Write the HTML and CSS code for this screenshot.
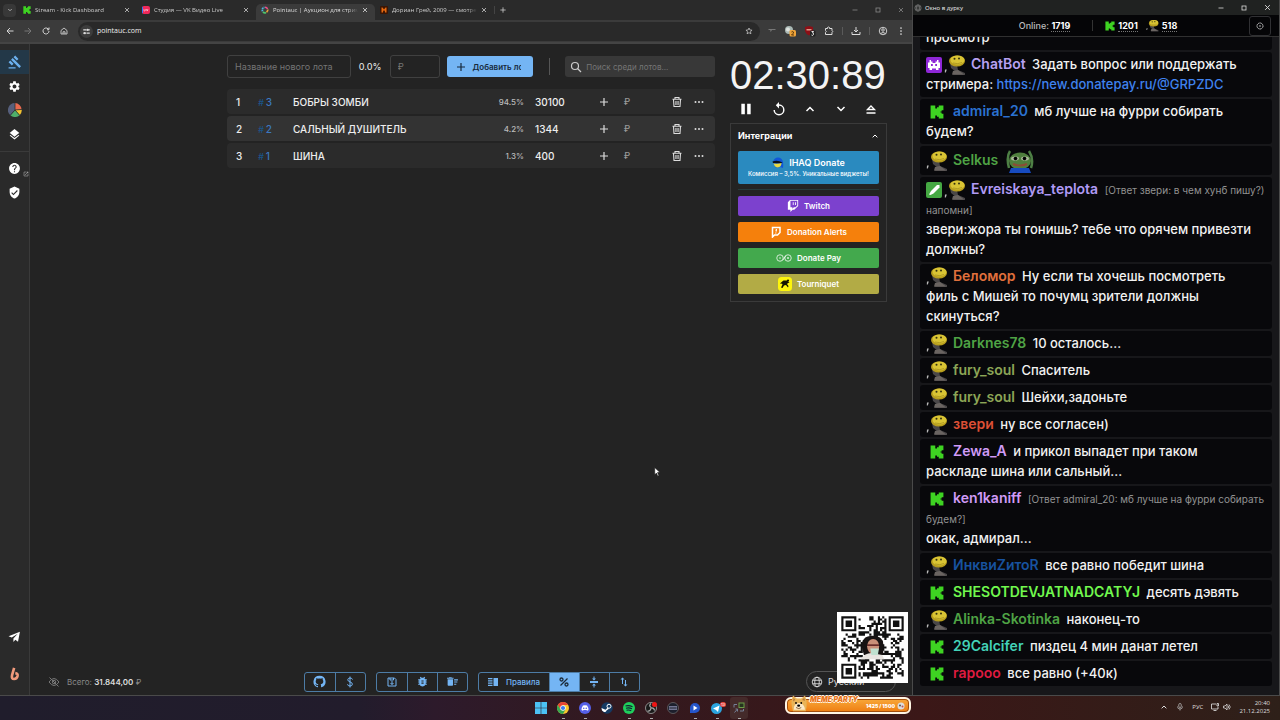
FILE: index.html
```html
<!DOCTYPE html>
<html lang="ru">
<head>
<meta charset="utf-8">
<title>Pointauc | Аукцион для стримеров</title>
<link rel="stylesheet" href="styles.css">
</head>
<body>
<svg class="defs" aria-hidden="true">
  <symbol id="kick" viewBox="0 0 24 24"><path fill="#3ed322" d="M1 1h8v5h3V4h3V1h8v8h-3v2h-2v2h2v2h3v8h-8v-3h-3v-2H9v5H1z"/></symbol>
  <symbol id="vk" viewBox="0 0 22 20">
    <path d="M1 14.500h1.800l-1 3H.8z" fill="#b9b9b9"/>
    <path d="M6 8l7 2 1 5 7 3v2H8l4-3-5-4z" fill="#4a4748"/><path d="M9 16l5-1 6 4.500H8z" fill="#6a6461"/>
    <ellipse cx="13" cy="6" rx="8" ry="5.500" fill="#b89e1d"/><ellipse cx="13.500" cy="5" rx="7" ry="4.500" fill="#d9c434"/>
    <circle cx="10.500" cy="3.800" r="1" fill="#35320f"/><circle cx="15" cy="3.500" r="1" fill="#35320f"/><path d="M9 8q5 1.500 9-.5" fill="none" stroke="#a8931f" stroke-width=".8"/>
  </symbol>
  <symbol id="close" viewBox="0 0 12 12"><path d="M2 2l8 8M10 2l-8 8" fill="none" stroke="currentColor" stroke-width="1.600"/></symbol>
  <symbol id="min" viewBox="0 0 12 12"><path d="M1 6h10" stroke="currentColor" stroke-width="1.600"/></symbol>
  <symbol id="max" viewBox="0 0 12 12"><rect x="2" y="2" width="8" height="8" fill="none" stroke="currentColor" stroke-width="1.600"/></symbol>
  <symbol id="plus" viewBox="0 0 24 24"><path d="M12 4v16M4 12h16" stroke="currentColor" stroke-width="2.400"/></symbol>
  <symbol id="up" viewBox="0 0 24 24"><path d="M5 16l7-7 7 7" fill="none" stroke="currentColor" stroke-width="3"/></symbol>
  <symbol id="down" viewBox="0 0 24 24"><path d="M5 8l7 7 7-7" fill="none" stroke="currentColor" stroke-width="3"/></symbol>
  <symbol id="trash" viewBox="0 0 24 24"><path d="M3 6.500h18M8 6V3h8v3M5 7l1 14h12l1-14" fill="none" stroke="currentColor" stroke-width="2.200"/><path d="M9.500 10v8M12 10v8M14.500 10v8" stroke="currentColor" stroke-width="1.600"/></symbol>
  <symbol id="dots" viewBox="0 0 24 24"><circle cx="5" cy="12" r="2" fill="currentColor"/><circle cx="12" cy="12" r="2" fill="currentColor"/><circle cx="19" cy="12" r="2" fill="currentColor"/></symbol>
  <symbol id="globe" viewBox="0 0 24 24"><g fill="none" stroke="currentColor" stroke-width="1.800"><circle cx="12" cy="12" r="9.500"/><ellipse cx="12" cy="12" rx="4.500" ry="9.500"/><path d="M3.500 8.500h17M3.500 15.500h17"/></g></symbol>
</svg>

<div class="desktop">
<section class="browser" aria-label="Браузер">
  <header class="tabs">
    <button class="tab-menu" aria-label="Поиск вкладок"><svg class="i6"><use href="#down"/></svg></button>
    <div class="tab"><svg class="i8"><use href="#kick"/></svg><span>Stream - Kick Dashboard</span><button aria-label="Закрыть"><svg class="i6"><use href="#close"/></svg></button></div>
    <div class="tab"><svg class="i8" viewBox="0 0 16 16"><rect width="16" height="16" rx="4" fill="#f0295a"/><path d="M0 4a4 4 0 0 1 2-3v14a4 4 0 0 1-2-3z" fill="#2b7bff"/><path d="M4 6v4h2M7.500 6v4M9 6l1.500 4L12 6" fill="none" stroke="#fff"/></svg><span>Студия — VK Видео Live</span><button aria-label="Закрыть"><svg class="i6"><use href="#close"/></svg></button></div>
    <div class="tab active"><svg class="i8" viewBox="0 0 16 16"><g fill="none" stroke-width="3.500"><path d="M8 2.500a5.500 5.500 0 0 1 5 3.500" stroke="#ef4b86"/><path d="M13.400 7a5.500 5.500 0 0 1-2.400 5.500" stroke="#e9a13c"/><path d="M10 13.200a5.500 5.500 0 0 1-6-1.500" stroke="#4dc46c"/><path d="M3.200 10.500A5.500 5.500 0 0 1 7 2.600" stroke="#4fb8e0" stroke-dasharray="3 1"/></g></svg><span>Pointauc | Аукцион для стримеров</span><button aria-label="Закрыть"><svg class="i6"><use href="#close"/></svg></button></div>
    <div class="tab"><svg class="i8" viewBox="0 0 16 16"><rect width="16" height="16" rx="2" fill="#3b1604"/><path d="M3 13V3h2l3 4 3-4h2v10h-3V8l-2 3-2-3v5z" fill="#e86a10"/></svg><span>Дориан Грей, 2009 — смотреть</span><button aria-label="Закрыть"><svg class="i6"><use href="#close"/></svg></button></div>
    <button class="new-tab" aria-label="Новая вкладка"><svg class="i8"><use href="#plus"/></svg></button>
    <div class="win-btns dim"><button aria-label="Свернуть"><svg class="i6"><use href="#min"/></svg></button><button aria-label="Развернуть"><svg class="i6"><use href="#max"/></svg></button><button aria-label="Закрыть окно"><svg class="i6"><use href="#close"/></svg></button></div>
  </header>
  <div class="toolbar">
    <button aria-label="Назад"><svg class="i8" viewBox="0 0 16 16"><path d="M15 8H2M8 2L2 8l6 6" fill="none" stroke="currentColor" stroke-width="2"/></svg></button>
    <button class="off" aria-label="Вперёд"><svg class="i8" viewBox="0 0 16 16"><path d="M1 8h13M8 2l6 6-6 6" fill="none" stroke="currentColor" stroke-width="2"/></svg></button>
    <button aria-label="Обновить"><svg class="i8" viewBox="0 0 16 16"><path d="M14 8a6 6 0 1 1-2-4.500L14 5V1M14 5.500h-4" fill="none" stroke="currentColor" stroke-width="2"/></svg></button>
    <button aria-label="Домой"><svg class="i8" viewBox="0 0 16 16"><path d="M2 7l6-5 6 5v7H2zM6 14V9.500h4V14" fill="none" stroke="currentColor" stroke-width="1.700"/></svg></button>
    <div class="address">
      <svg class="site" viewBox="0 0 24 24"><circle cx="12" cy="12" r="12" fill="#3c3c3c"/><path d="M6 9h6M15 9h3M6 15h3M12 15h6" stroke="#ddd" stroke-width="2"/><circle cx="14" cy="9" r="2" fill="#ddd"/><circle cx="9" cy="15" r="2" fill="#ddd"/></svg>
      <input type="text" value="pointauc.com" aria-label="Адрес">
      <svg class="i8" viewBox="0 0 24 24"><path d="M12 3l2.700 6 6.500.6-4.900 4.300 1.500 6.400L12 17l-5.800 3.300 1.500-6.400-4.900-4.300 6.500-.6z" fill="none" stroke="#ddd" stroke-width="2"/></svg>
    </div>
    <div class="ext">
      <svg class="i8" viewBox="0 0 16 16"><path d="M1 4h14v2H8l-2 3H4l1-3H1z" fill="#777"/></svg>
      <svg class="i12" viewBox="0 0 24 24"><circle cx="10" cy="10" r="8" fill="#a9b8b4"/><circle cx="8" cy="9" r="4" fill="#dfe3df"/><rect x="11" y="10" width="13" height="13" rx="3" fill="#f0a43a"/><path d="M15 14q3-2 4 0t-4 6h5" fill="none" stroke="#4b2c05" stroke-width="1.800"/></svg>
      <svg class="i12" viewBox="0 0 24 24"><path d="M2 4l8-2 8 2v8q-2 7-8 9-6-2-8-9z" fill="#8d0f16"/><path d="M5 8h10v3H5z" fill="#d98"/><rect x="12" y="11" width="11" height="12" rx="2" fill="#222"/><path d="M15 13h4l-2 3q3 0 2 3t-4 1" fill="none" stroke="#fff" stroke-width="1.800"/></svg>
      <svg class="i10" viewBox="0 0 20 20"><path d="M3 5h4V3q2-2 4 0v2h5v4q3 2 0 4v4H3v-4q3-2 0-4z" fill="none" stroke="#ddd" stroke-width="2"/></svg>
      <i></i>
      <svg class="i10" viewBox="0 0 20 20"><path d="M10 2v10M6 8l4 4 4-4M2 12v5h16v-5" fill="none" stroke="#ddd" stroke-width="2"/></svg>
      <i></i>
      <svg class="i10" viewBox="0 0 20 20"><circle cx="10" cy="10" r="7.500" fill="none" stroke="#ddd" stroke-width="1.800"/><circle cx="10" cy="8" r="2.500" fill="none" stroke="#ddd" stroke-width="1.800"/><path d="M5 15q5-4 10 0" fill="none" stroke="#ddd" stroke-width="1.800"/></svg>
      <svg class="i10" viewBox="0 0 20 20"><circle cx="10" cy="4" r="1.700" fill="#ddd"/><circle cx="10" cy="10" r="1.700" fill="#ddd"/><circle cx="10" cy="16" r="1.700" fill="#ddd"/></svg>
    </div>
  </div>

  <div class="page">
    <nav class="side">
      <a class="on" href="#auction" aria-label="Аукцион"><svg class="i14" viewBox="0 0 24 24"><path fill="currentColor" d="M1 21h12v2H1zM5.245 8.070l2.830-2.827 14.140 14.142-2.828 2.828zM12.317 1l5.657 5.656-2.830 2.830-5.654-5.660zM3.825 9.485l5.657 5.657-2.828 2.828-5.657-5.657z"/></svg></a>
      <a href="#settings" aria-label="Настройки"><svg class="i13" viewBox="0 0 24 24"><path fill="currentColor" d="M19.140 12.940c.04-.3.06-.61.06-.94 0-.32-.02-.64-.07-.94l2.030-1.580c.18-.14.23-.41.12-.61l-1.920-3.320c-.12-.22-.37-.29-.59-.22l-2.390.96c-.5-.38-1.030-.7-1.620-.94l-.36-2.540c-.04-.24-.24-.41-.48-.41h-3.840c-.24 0-.43.17-.47.41l-.36 2.540c-.59.24-1.130.57-1.620.94l-2.390-.96c-.22-.08-.47 0-.59.22L2.740 8.870c-.12.21-.08.47.12.61l2.030 1.580c-.05.3-.09.63-.09.94s.02.64.07.94l-2.030 1.580c-.18.14-.23.41-.12.61l1.920 3.320c.12.22.37.29.59.22l2.390-.96c.5.38 1.030.7 1.620.94l.36 2.540c.05.24.24.41.48.41h3.840c.24 0 .44-.17.47-.41l.36-2.540c.59-.24 1.130-.56 1.620-.94l2.390.96c.22.08.47 0 .59-.22l1.920-3.320c.12-.22.07-.47-.12-.61l-2.010-1.580zM12 15.600c-1.980 0-3.600-1.620-3.600-3.600s1.620-3.600 3.600-3.600 3.600 1.620 3.600 3.600-1.620 3.600-3.600 3.600z"/></svg></a>
      <a href="#wheel" aria-label="Колесо"><svg class="i14" viewBox="-12 -12 24 24"><path d="M0 0V-12A12 12 0 0 1 11.400-1z" fill="#e8694f"/><path d="M0 0L11.400-1A12 12 0 0 1 8 9z" fill="#f2c230"/><path d="M0 0l8 9A12 12 0 0 1-8 9z" fill="#4fae6a"/><path d="M0 0l-8 9A12 12 0 0 1 0-12z" fill="#565f7c"/><path d="M0-12V0l12-1M0 0l8 9M0 0l-8 9" stroke="#2a2a2a" stroke-width="1.300" fill="none"/></svg></a>
      <a href="#overlays" aria-label="Оверлеи"><svg class="i13" viewBox="0 0 24 24"><path fill="currentColor" d="m11.990 18.540-7.370-5.730L3 14.070l9 7 9-7-1.630-1.270-7.380 5.740zM12 16l7.360-5.730L21 9l-9-7-9 7 1.630 1.270L12 16z"/></svg></a>
      <hr>
      <a href="#help" aria-label="Помощь"><svg class="i13" viewBox="0 0 24 24"><path fill="currentColor" d="M12 2C6.480 2 2 6.480 2 12s4.480 10 10 10 10-4.480 10-10S17.520 2 12 2zm1 17h-2v-2h2v2zm2.070-7.750l-.9.920C13.450 12.900 13 13.500 13 15h-2v-.5c0-1.100.45-2.100 1.170-2.830l1.240-1.260c.37-.36.59-.86.59-1.410 0-1.100-.9-2-2-2s-2 .9-2 2H8c0-2.210 1.790-4 4-4s4 1.790 4 4c0 .88-.36 1.680-.93 2.250z"/></svg><svg class="external" viewBox="0 0 24 24"><path fill="#bbb" d="M19 19H5V5h7V3H5c-1.110 0-2 .9-2 2v14c0 1.100.89 2 2 2h14c1.100 0 2-.9 2-2v-7h-2v7zM14 3v2h3.590l-9.830 9.830 1.410 1.410L19 6.410V10h2V3h-7z"/></svg></a>
      <a href="#privacy" aria-label="Безопасность"><svg class="i13" viewBox="0 0 24 24"><path fill="currentColor" d="M12 1L3 5v6c0 5.550 3.840 10.740 9 12 5.160-1.260 9-6.450 9-12V5l-9-4zm-2 16l-4-4 1.410-1.410L10 14.170l6.590-6.590L18 9l-8 8z"/></svg></a>
      <div class="social">
        <a href="#telegram" aria-label="Telegram"><svg class="i13" viewBox="0 0 24 24"><path fill="currentColor" d="M22 3L1 11.500l6 2.500L18 7l-8 8.500V22l3.500-4 5 3.500z"/></svg></a>
        <a href="#boosty" aria-label="Boosty"><svg class="i14" viewBox="0 0 24 24"><path d="M10.500 1.500L7 14q-1.500 6.500 3.500 6.500t6-5.500q.5-4-4-4.500" fill="none" stroke="#f09a7c" stroke-width="4.500"/></svg></a>
      </div>
    </nav>

    <main class="auction">
      <div class="work">
        <div class="lots">
          <form class="new-lot">
            <input class="lot-name" type="text" placeholder="Название нового лота" aria-label="Название нового лота">
            <output>0.0%</output>
            <input class="lot-sum" type="text" placeholder="₽" aria-label="Сумма">
            <button class="add" type="button"><svg class="i12"><use href="#plus"/></svg><span>Добавить лот</span></button>
            <i class="bar"></i>
            <label class="search"><svg class="i12" viewBox="0 0 24 24"><circle cx="10" cy="10" r="7" fill="none" stroke="#ccc" stroke-width="2.400"/><path d="M15 15l7 7" stroke="#ccc" stroke-width="2.600"/></svg><input type="text" placeholder="Поиск среди лотов..." aria-label="Поиск среди лотов"></label>
          </form>
          <ol class="rows">
            <li><b>1</b><span class="id"><i>#</i>3</span><span class="name">БОБРЫ ЗОМБИ</span><span class="pct">94.5%</span><span>30100</span><button aria-label="Добавить сумму"><svg class="i12"><use href="#plus"/></svg></button><span class="rub">₽</span><button aria-label="Удалить"><svg class="i12"><use href="#trash"/></svg></button><button aria-label="Ещё"><svg class="i12"><use href="#dots"/></svg></button></li>
            <li><b>2</b><span class="id"><i>#</i>2</span><span class="name">САЛЬНЫЙ ДУШИТЕЛЬ</span><span class="pct">4.2%</span><span>1344</span><button aria-label="Добавить сумму"><svg class="i12"><use href="#plus"/></svg></button><span class="rub">₽</span><button aria-label="Удалить"><svg class="i12"><use href="#trash"/></svg></button><button aria-label="Ещё"><svg class="i12"><use href="#dots"/></svg></button></li>
            <li><b>3</b><span class="id"><i>#</i>1</span><span class="name">ШИНА</span><span class="pct">1.3%</span><span>400</span><button aria-label="Добавить сумму"><svg class="i12"><use href="#plus"/></svg></button><span class="rub">₽</span><button aria-label="Удалить"><svg class="i12"><use href="#trash"/></svg></button><button aria-label="Ещё"><svg class="i12"><use href="#dots"/></svg></button></li>
          </ol>
        </div>
        <aside>
          <div class="timer">02:30:89</div>
          <div class="controls">
            <button aria-label="Пауза"><svg class="i14" viewBox="0 0 24 24"><path fill="currentColor" d="M4 3h6v18H4zM14 3h6v18h-6z"/></svg></button>
            <button aria-label="Сбросить"><svg class="i14" viewBox="0 0 24 24"><path fill="currentColor" d="M12 4V0L6.500 5.500 12 11V6.500a7 7 0 1 1-7 7H2.500A9.500 9.500 0 1 0 12 4z"/></svg></button>
            <button aria-label="Больше"><svg class="i12"><use href="#up"/></svg></button>
            <button aria-label="Меньше"><svg class="i12"><use href="#down"/></svg></button>
            <button aria-label="Максимум"><svg class="i12" viewBox="0 0 24 24"><path d="M5 13l7-7 7 7zM3 20h18" fill="none" stroke="currentColor" stroke-width="2.600"/></svg></button>
          </div>
          <section class="integrations">
            <h2>Интеграции <svg class="i8"><use href="#up"/></svg></h2>
            <button class="ihaq"><strong><svg class="i12" viewBox="0 0 24 24"><path d="M2 10Q4 1 12 1t10 9q1 7 0 12l-6-2-8 2z" fill="#1156d8"/><path d="M1 9q10-4 20 2l-4 2-15-1z" fill="#0b1119"/><path d="M3 13q9 1 16-1 0 8-8 9-5 0-8-8z" fill="#e9dc42"/></svg>IHAQ Donate</strong><small>Комиссия – 3,5%. Уникальные виджеты!</small></button>
            <hr>
            <button class="twitch"><svg class="i12" viewBox="0 0 24 24"><path fill="#fff" d="M11.571 4.714h1.715v5.143H11.570zm4.715 0H18v5.143h-1.714zM6 0L1.714 4.286v15.428h5.143V24l4.286-4.286h3.428L22.286 12V0zm14.571 11.143l-3.428 3.428h-3.429l-3 3v-3H6.857V1.714h13.714Z"/></svg>Twitch</button>
            <button class="alerts"><svg class="i12" viewBox="0 0 24 24"><path d="M5 3h15v10l-5 5H9l-4 4z" fill="none" stroke="#fff" stroke-width="3"/><path d="M13 6l-1 5M11.800 13l-.3 2" stroke="#fff" stroke-width="2.600"/></svg>Donation Alerts</button>
            <button class="dpay"><svg class="wide" viewBox="0 0 32 16"><g fill="none" stroke="#fff" stroke-width="1.500"><circle cx="8" cy="8" r="6.500"/><circle cx="24" cy="8" r="6.500"/><path d="M14 12l5-8M6 8h4M22 8h4M24 6v4"/></g></svg>Donate Pay</button>
            <button class="tourn"><svg class="i14" viewBox="0 0 28 28"><rect width="28" height="28" rx="7" fill="#fdf50c"/><path d="M5 12l6-5h7l5 4-3 1-2 2 3 4-1 3-4-5-4 1-3 5-3-1 3-6-1-2-3 1z" fill="#141400"/><circle cx="20" cy="7" r="2.200" fill="#141400"/></svg>Tourniquet</button>
          </section>
        </aside>
      </div>
      <footer class="foot">
        <div class="total"><svg class="i12" viewBox="0 0 24 24"><g fill="none" stroke="#777" stroke-width="2"><path d="M2 12q10-14 20 0-10 14-20 0z"/><circle cx="12" cy="12" r="3.500"/><path d="M3 3l18 18"/></g></svg><span>Всего: <b>31.844,00</b> ₽</span></div>
        <div class="tools">
          <div class="group">
            <button aria-label="GitHub"><svg class="i13" viewBox="0 0 24 24"><path fill="currentColor" d="M12 1.270a11 11 0 00-3.480 21.460c.55.09.73-.28.73-.55v-1.840c-3.030.64-3.670-1.460-3.670-1.460-.55-1.290-1.280-1.650-1.280-1.650-.92-.65.1-.65.1-.65 1.100 0 1.730 1.100 1.730 1.100.92 1.650 2.570 1.200 3.210.92a2 2 0 01.64-1.470c-2.470-.27-5.040-1.190-5.040-5.500 0-1.100.46-2.100 1.200-2.840a3.760 3.760 0 010-2.930s.91-.28 3.110 1.100c1.800-.49 3.700-.49 5.500 0 2.100-1.380 3.020-1.100 3.020-1.100a3.760 3.760 0 01.1 2.930c.83.74 1.200 1.740 1.200 2.940 0 4.210-2.570 5.130-5.040 5.400.45.37.82.92.82 2.020v3.030c0 .27.1.64.73.55A11 11 0 0012 1.270"/></svg></button>
            <button aria-label="Поддержать"><svg class="i12" viewBox="0 0 24 24"><path d="M17 7q-1-3-5-3T7.500 7.500q0 3 4.500 4.200t4.700 4.600Q16.500 20 12 20t-5-3.500M12 1v22" fill="none" stroke="currentColor" stroke-width="2"/></svg></button>
          </div>
          <div class="group">
            <button aria-label="Сохранить"><svg class="i12" viewBox="0 0 24 24"><path d="M4 4h13l3 3v13H4zM8 4v4h7V4M12 10v7M9 14l3 3 3-3" fill="none" stroke="currentColor" stroke-width="2"/></svg></button>
            <button aria-label="Сообщить об ошибке"><svg class="i13" viewBox="0 0 24 24"><path fill="currentColor" d="M20 8h-2.810c-.45-.78-1.070-1.450-1.820-1.960L17 4.410 15.590 3l-2.170 2.170C12.960 5.060 12.490 5 12 5s-.96.06-1.410.17L8.410 3 7 4.410l1.620 1.630C7.880 6.550 7.260 7.220 6.810 8H4v2h2.090c-.05.33-.09.66-.09 1v1H4v2h2v1c0 .34.04.67.09 1H4v2h2.810c1.040 1.790 2.970 3 5.190 3s4.150-1.210 5.190-3H20v-2h-2.090c.05-.33.09-.66.09-1v-1h2v-2h-2v-1c0-.34-.04-.67-.09-1H20V8zm-6 8h-4v-2h4v2zm0-4h-4v-2h4v2z"/></svg></button>
            <button aria-label="Очистить"><svg class="i13" viewBox="0 0 24 24"><path fill="currentColor" d="M15 16h4v2h-4zm0-8h7v2h-7zm0 4h6v2h-6zM3 18c0 1.100.9 2 2 2h6c1.100 0 2-.9 2-2V8H3v10zM14 5h-3l-1-1H6L5 5H2v2h12z"/></svg></button>
          </div>
          <div class="group">
            <button class="rules"><svg class="i12" viewBox="0 0 24 24"><path fill="currentColor" d="M2 4h9v2.500H2zM2 8.500h9V11H2zM2 13h9v2.500H2zM2 17.500h9V20H2zM13 4h9v16h-9z"/></svg>Правила</button>
            <button class="sel" aria-label="Проценты"><svg class="i12" viewBox="0 0 24 24"><g fill="none" stroke="currentColor" stroke-width="2.600"><circle cx="7" cy="7" r="3"/><circle cx="17" cy="17" r="3"/><path d="M19 5L5 19"/></g></svg></button>
            <button aria-label="Выровнять"><svg class="i12" viewBox="0 0 24 24"><path fill="currentColor" d="M8 19h3v4h2v-4h3l-4-4-4 4zm8-14h-3V1h-2v4H8l4 4 4-4zM4 10v4h16v-4H4z"/></svg></button>
            <button aria-label="Сортировка"><svg class="i12" viewBox="0 0 24 24"><path fill="currentColor" d="M9 3L5 7h3v9h2V7h3zM16 17V8h-2v9h-3l4 4 4-4z"/></svg></button>
          </div>
        </div>
        <button class="lang"><svg class="i12"><use href="#globe"/></svg>Русский</button>
      </footer>
      <svg class="cursor" viewBox="0 0 12 18"><path d="M1 1v13l3-3 2.500 5.500 2-1L6 10h4.500z" fill="#fff" stroke="#111"/></svg>
    </main>
  </div>
  <svg class="qr" viewBox="-2 -2 33 33" role="img" aria-label="QR-код"></svg>
</section>

<section class="chat" aria-label="Чат">
  <header class="chat-title"><svg class="i8"><use href="#globe"/></svg><span>Окно в дурку</span><div class="win-btns"><button aria-label="Свернуть"><svg class="i6"><use href="#min"/></svg></button><button aria-label="Развернуть"><svg class="i6"><use href="#max"/></svg></button><button aria-label="Закрыть окно"><svg class="i7"><use href="#close"/></svg></button></div></header>
  <div class="stats">
    <span class="online">Online: <b>1719</b></span><i></i>
    <span class="count"><svg class="i10"><use href="#kick"/></svg><b>1201</b></span>
    <span class="count"><svg class="i13"><use href="#vk"/></svg><b>518</b></span>
    <button aria-label="Настройки чата"><svg class="i8" viewBox="0 0 24 24"><circle cx="12" cy="12" r="9" fill="none" stroke="#ccc" stroke-width="3" stroke-dasharray="4 1"/><circle cx="12" cy="12" r="2.500" fill="#ccc"/></svg></button>
  </div>
  <div class="log">
    <p>просмотр</p>
    <p><svg class="badge" viewBox="0 0 16 16"><rect width="16" height="16" rx="2" fill="#8f27d8"/><path fill="#fff" d="M3.500 3H5v1.500h1.500V6h3V4.500H11V3h1.500v2.500H14V11h-1.500v2H10v-1.500H6V13H3.500v-2H2V5.500h1.500z"/><path fill="#8f27d8" d="M5 7h1.800v2H5zM9.200 7H11v2H9.200z"/></svg><svg class="who"><use href="#vk"/></svg><b class="c1">ChatBot</b> Задать вопрос или поддержать стримера: <a href="#donate">https://new.donatepay.ru/@GRPZDC</a></p>
    <p><svg class="k"><use href="#kick"/></svg><b class="c2">admiral_20</b> мб лучше на фурри собирать будем?</p>
    <p class="tall"><svg class="who"><use href="#vk"/></svg><b class="c3">Selkus</b> <svg class="emote" viewBox="0 0 28 24"><path d="M3 19Q0 8 4 2M25 19q3-9-2-17" fill="none" stroke="#4e8045" stroke-width="2.500"/><ellipse cx="14" cy="12" rx="11" ry="8.500" fill="#4f7f3d"/><path d="M5 19h18l2 5H3z" fill="#174bc0"/><ellipse cx="9" cy="9.500" rx="4" ry="2" fill="#a9b899"/><ellipse cx="19" cy="9.500" rx="4" ry="2" fill="#a9b899"/><circle cx="9.500" cy="9.500" r="1.800"/><circle cx="18.500" cy="9.500" r="1.800"/><path d="M7 15q7 3 14 0" fill="none" stroke="#8d4b36" stroke-width="2"/></svg></p>
    <p><svg class="badge" viewBox="0 0 16 16"><rect width="16" height="16" rx="2" fill="#45a843"/><path d="M3 12.500l2-3.500 6-6h2.500v2.500l-6 6-3 1.500z" fill="#fff"/></svg><svg class="who"><use href="#vk"/></svg><b class="c4">Evreiskaya_teplota</b> <small>[Ответ звери: в чем хунб пишу?) напомни]</small><br>звери:жора ты гонишь? тебе что орячем привезти должны?</p>
    <p><svg class="who"><use href="#vk"/></svg><b class="c5">Беломор</b> Ну если ты хочешь посмотреть<br>филь с Мишей то почумц зрители должны<br>скинуться?</p>
    <p><svg class="who"><use href="#vk"/></svg><b class="c3">Darknes78</b> 10 осталось...</p>
    <p><svg class="who"><use href="#vk"/></svg><b class="c6">fury_soul</b> Спаситель</p>
    <p><svg class="who"><use href="#vk"/></svg><b class="c6">fury_soul</b> Шейхи,задоньте</p>
    <p><svg class="who"><use href="#vk"/></svg><b class="c7">звери</b> ну все согласен)</p>
    <p><svg class="k"><use href="#kick"/></svg><b class="c8">Zewa_A</b> и прикол выпадет при таком<br>раскладе шина или сальный...</p>
    <p><svg class="k"><use href="#kick"/></svg><b class="c8">ken1kaniff</b> <small>[Ответ admiral_20: мб лучше на фурри собирать будем?]</small><br>окак, адмирал...</p>
    <p><svg class="who"><use href="#vk"/></svg><b class="c9">ИнквиZитоR</b> все равно победит шина</p>
    <p><svg class="k"><use href="#kick"/></svg><b class="c10">SHESOTDEVJATNADCATYJ</b> десять дэвять</p>
    <p><svg class="who"><use href="#vk"/></svg><b class="c3">Alinka-Skotinka</b> наконец-то</p>
    <p><svg class="k"><use href="#kick"/></svg><b class="c11">29Calcifer</b> пиздец 4 мин данат летел</p>
    <p><svg class="k"><use href="#kick"/></svg><b class="c12">rapooo</b> все равно (+40к)</p>
  </div>
</section>
</div>

<footer class="taskbar">
  <div class="apps">
    <button aria-label="Пуск"><svg viewBox="0 0 24 24"><path d="M0 0h11.400v11.400H0zM12.600 0H24v11.400H12.600zM0 12.600h11.400V24H0zM12.600 12.600H24V24H12.600z" fill="#4cc2f5"/></svg></button>
    <button class="run" aria-label="Chrome"><svg viewBox="-12 -12 24 24"><circle r="12" fill="#f8c62c"/><path d="M-10.400-6A12 12 0 0 1 10.400-6H0L-5 3z" fill="#e64435"/><path d="M-10.400-6A12 12 0 0 0 0 12L5 3-5 3z" fill="#35a853"/><circle r="5.500" fill="#fff"/><circle r="4.200" fill="#3c7ef0"/></svg></button>
    <button class="run" aria-label="Discord"><svg viewBox="0 0 24 24"><circle cx="12" cy="12" r="12" fill="#5560e8"/><path d="M8 7q4-1.500 8 0 3 4 3 9l-3 1.500-1-1.500H9l-1 1.500L5 16q0-5 3-9z" fill="#fff"/><circle cx="9.500" cy="12.500" r="1.600" fill="#5560e8"/><circle cx="14.500" cy="12.500" r="1.600" fill="#5560e8"/></svg></button>
    <button aria-label="Steam"><svg viewBox="0 0 24 24"><circle cx="12" cy="12" r="11.500" fill="#153a63"/><circle cx="16" cy="8.500" r="4" fill="none" stroke="#fff" stroke-width="2"/><path d="M1 12l8 3.500 4-4 3 2-5 3.500q-1 4-5 3l-4-3z" fill="#fff"/></svg></button>
    <button class="run" aria-label="Spotify"><svg viewBox="0 0 24 24"><circle cx="12" cy="12" r="12" fill="#1fcf5c"/><path d="M5 8q7-2 14 1.500M6 12.500q6-2 12 1M7 16.500q5-1.500 9.500 1" fill="none" stroke="#123" stroke-width="2.200"/></svg></button>
    <button class="run" aria-label="OBS"><svg viewBox="0 0 24 24"><circle cx="12" cy="12" r="11" fill="#191919" stroke="#aaa" stroke-width="1.600"/><path d="M12 3q-5 4 0 8M19 17q-1-6-7-5M5 18q6 1 7-6" fill="none" stroke="#aaa" stroke-width="2.500"/><circle cx="19" cy="5" r="5" fill="#ef1515"/></svg></button>
    <button aria-label="Плеер"><svg viewBox="0 0 24 24"><circle cx="12" cy="12" r="11" fill="#1d1f2c" stroke="#777" stroke-width="1.300"/><path d="M4 8h16v8H4z" fill="#737694"/><path d="M5 12h14" stroke="#20222e" stroke-width="2"/></svg></button>
    <button class="run" aria-label="Видео"><svg viewBox="0 0 24 24"><path d="M2 12a10 10 0 1 1 10 10H2z" fill="#2555ca"/><path d="M9 7l8 5-8 5z" fill="#fff"/></svg></button>
    <button class="run" aria-label="Telegram"><svg viewBox="0 0 24 24"><circle cx="11" cy="13" r="11" fill="#2ba5e0"/><path d="M4 13l13-6-3 13-4-4z" fill="#fff"/></svg><em>13</em></button>
    <button class="run current" aria-label="Чат"><svg viewBox="0 0 24 24"><path d="M2 5h6M2 5v6M3 21l6-7M9 14H5M9 14v5M14 18h7v-4" fill="none" stroke="#748096" stroke-width="2"/><rect x="12" y="2" width="10" height="9" fill="#25331e" stroke="#6b9b47" stroke-width="2"/></svg></button>
  </div>
  <div class="tray"><svg class="i8"><use href="#up"/></svg><svg class="i8" viewBox="0 0 16 16"><rect x="5.500" y="1" width="5" height="8" rx="2.500" fill="none" stroke="#bbb" stroke-width="1.500"/><path d="M3 7q0 5 5 5t5-5M8 12v3" fill="none" stroke="#bbb" stroke-width="1.500"/></svg><span>РУС</span><span class="net"><svg class="i8" viewBox="0 0 16 16"><path d="M10 2H1v10h13V8M5 15h6M12 1v5h3V1z" fill="none" stroke="#ddd" stroke-width="1.700"/></svg><svg class="i8" viewBox="0 0 16 16"><path d="M1 6h3l4-4v12l-4-4H1zM10 5q3 3 0 6M12 3q5 5 0 10" fill="none" stroke="#ddd" stroke-width="1.500"/></svg></span><time>20:40<br>21.12.2025</time></div>
  <div class="goal"><svg class="doge" viewBox="0 0 24 24"><path d="M4 23Q0 11 4 2l5 4h6l5-4q4 10 1 21z" fill="#e9b458"/><path d="M5 21q0-9 7-9t8 9z" fill="#fbe9c7"/><path d="M5 5l2 3-3 2zM19 5l-3 3 4 1z" fill="#b87636"/><circle cx="8" cy="12" r="1.200"/><circle cx="15" cy="12" r="1.200"/><ellipse cx="11.500" cy="15.500" rx="2" ry="1.400"/><path d="M8 18q4 3 7 0" fill="none" stroke="#6d3d14"/></svg><span>MEME PARTY</span><b>1425 / 1500</b><svg class="i8" viewBox="0 0 16 16"><circle cx="8" cy="8" r="7" fill="#ddd"/><circle cx="6" cy="7" r="2" fill="#555"/><circle cx="11" cy="9" r="2" fill="#b55"/></svg></div>
</footer>
<script src="qr.js"></script>
</body>
</html>
```
FILE: styles.css
```css
* { box-sizing: border-box; }
body { margin: 0; height: 100vh; display: flex; flex-direction: column; background: #1b1b1b; color: #fff; font-family: Inter, "Noto Sans", sans-serif; font-size: 10px; overflow: hidden; }
button, input { font: inherit; color: inherit; background: none; border: 0; padding: 0; margin: 0; min-width: 0; }
button { display: flex; align-items: center; justify-content: center; cursor: pointer; }
a { color: inherit; text-decoration: none; }
svg { display: block; flex: none; }
hr { border: 0; margin: 0; height: 1px; background: #3a3a3a; }
.defs { position: absolute; width: 0; height: 0; }
.i6 { width: 6px; height: 6px; }
.i7 { width: 7px; height: 7px; }
.i8 { width: 8px; height: 8px; }
.i10 { width: 10px; height: 10px; }
.i12 { width: 12px; height: 12px; }
.i13 { width: 13px; height: 13px; }
.i14 { width: 14px; height: 14px; }

.desktop { flex: 1; display: flex; min-height: 0; }
.browser { position: relative; flex: 1; min-width: 0; display: flex; flex-direction: column; background: #232323; border-bottom: 1px solid #4a4a4a; }

.tabs { height: 20px; display: flex; align-items: center; background: #2a2a2a; padding: 0 8px 0 3px; font: 6px "Open Sans", "Noto Sans", sans-serif; color: #ccc; }
.tab-menu { width: 13px; height: 13px; border-radius: 4px; background: #383838; margin-right: 2px; }
.tab { flex: 0 1 119px; height: 20px; display: flex; align-items: center; gap: 4px; padding: 0 7px 0 5px; min-width: 0; }
.tab span { flex: 1; overflow: hidden; white-space: nowrap; mask-image: linear-gradient(90deg, #000 88%, transparent 100%); }
.tab.active { background: #3b3b3b; border-radius: 5px 5px 0 0; margin-top: 4px; height: 16px; padding-bottom: 4px; color: #ddd; }
.new-tab { border-left: 1px solid #444; padding-left: 4px; }
.win-btns { margin-left: auto; display: flex; gap: 17px; color: #ddd; }
.dim { color: #888; }

.toolbar { height: 24px; display: flex; align-items: center; gap: 10px; background: #3b3b3b; border-bottom: 2px solid #444; padding: 0 6px; color: #d5d5d5; }
.off { color: #777; }
.address { flex: 1; display: flex; align-items: center; gap: 4px; height: 19px; border-radius: 10px; background: #292929; padding: 0 7px 0 2px; }
.address input { flex: 1; font: 7px/12px "Open Sans", "Noto Sans", sans-serif; color: #eee; outline: 0; }
.site { width: 13px; height: 13px; }
.ext { display: flex; align-items: center; gap: 8px; margin-left: -2px; }
.ext i { width: 1px; height: 8px; background: #5a5a5a; }

.page { flex: 1; display: flex; min-height: 0; }
.side { width: 30px; flex: none; display: flex; flex-direction: column; background: #2a2a2a; border-right: 1px solid #3a3a3a; padding-top: 6px; }
.side a { position: relative; height: 24px; display: flex; align-items: center; justify-content: center; }
.side hr { margin: 5px 0 4px; }
.side .on { background: #233848; color: #6cb0ee; }
.external { position: absolute; width: 6px; height: 6px; right: 0; bottom: 3px; }
.social { margin-top: auto; display: flex; flex-direction: column; gap: 14px; padding-bottom: 9px; }

.auction { position: relative; flex: 1; min-width: 0; display: flex; flex-direction: column; justify-content: space-between; padding: 11px 16px 3px 0; }
.work { display: grid; grid-template-columns: minmax(0, 182fr) minmax(0, 488fr) 157px; column-gap: 15px; padding-right: 9px; }
.lots { grid-column: 2; }
.new-lot { display: flex; align-items: center; height: 23px; }
.new-lot > input { height: 23px; border: 1px solid #404040; border-radius: 3px; padding: 0 7px; font-size: 9px; }
::placeholder { color: #757575; opacity: 1; }
.new-lot .lot-name { flex: 124 1 124px; }
.new-lot output { margin: 0 8px; font-size: 9px; font-weight: 500; color: #ddd; }
.new-lot .lot-sum { flex: 51 1 51px; }
.add { flex: 86 1 86px; height: 21px; margin-left: 7px; background: #74b5f4; border-radius: 3px; color: #16293b; font-size: 8px; font-weight: 600; gap: 5px; padding: 0 12px 0 8px; }
.add span { flex: 1; text-align: left; overflow: hidden; white-space: nowrap; }
.bar { width: 1px; height: 17px; background: #555; margin: 0 15px 0 16px; }
.search { flex: 150 1 150px; min-width: 0; display: flex; align-items: center; gap: 4px; height: 21px; padding: 0 5px; background: #383838; border-radius: 3px; font-size: 8px; }
.search input { flex: 1; }
.rows { list-style: none; margin: 11px 0 0; padding: 0; display: grid; gap: 2px; }
.rows li { display: grid; grid-template-columns: 22px 35px minmax(0, 1fr) 32px 53px 31px 16px 48px 32px; align-items: center; height: 25px; padding: 0 0 0 9px; border-radius: 4px; background: #2b2b2b; font-weight: 500; color: #eee; }
.rows li:nth-child(even) { background: #333; }
.rows b { font-weight: 500; }
.rows .id { color: #3c78c0; }
.rows .id i { color: #1c5489; padding-right: 2px; font-size: 9px; }
.rows .pct { font-size: 8px; color: #bbb; text-align: right; padding-right: 11px; margin-left: -10px; }
.rows .rub { color: #999; text-align: center; font-size: 9px; }
.rows button { color: #ddd; }
.rows li button:nth-of-type(2) { justify-content: flex-end; }

.timer { font: 40px/40px "Liberation Sans", Arial, sans-serif; text-align: center; color: #f4f4f4; margin-right: 6px; }
.controls { display: flex; justify-content: space-between; align-items: center; height: 14px; margin: 7px 10px 7px 9px; }
.integrations { border: 1px solid #3a3a3a; padding: 6px 7px 7px; display: flex; flex-direction: column; gap: 6px; }
.integrations h2 { display: flex; justify-content: space-between; align-items: center; margin: 0 0 3px; font-size: 9px; line-height: 12px; font-weight: 700; }
.integrations button { height: 20px; border-radius: 2px; gap: 5px; font-size: 8px; font-weight: 600; }
.integrations hr { margin: -1px 0 0; background: #283b3c; }
.integrations .ihaq { height: 33px; flex-direction: column; gap: 0; background: #2a8abf; }
.ihaq strong { display: flex; align-items: center; gap: 5px; font-size: 9px; font-weight: 600; }
.ihaq small { font-size: 6px; line-height: 10px; font-weight: 500; white-space: nowrap; }
.twitch { background: #7c41ce; }
.alerts { background: #f5800c; }
.dpay { background: #43a94d; }
.tourn { background: #b2ab45; }
.wide { width: 16px; height: 8px; }

.foot { display: grid; grid-template-columns: 273fr auto 256fr; align-items: center; }
.total { display: flex; align-items: center; gap: 7px; padding-left: 18px; font-size: 8px; color: #888; }
.total b { color: #ddd; font-weight: 600; }
.tools { display: flex; gap: 10px; }
.group { display: flex; border: 1px solid #4d7ca6; border-radius: 3px; color: #74b5f4; }
.group button { width: 30px; height: 18px; }
.group button + button { border-left: 1px solid #4d7ca6; }
.group .rules { width: 70px; gap: 7px; font-size: 8px; font-weight: 500; }
.group .sel { background: #74b5f4; color: #1c2b39; }
.lang { justify-self: end; height: 21px; width: 90px; justify-content: flex-start; gap: 5px; padding-left: 4px; border: 1px solid #555; border-radius: 11px; font-size: 9px; color: #ddd; }
.cursor { position: absolute; width: 7px; height: 10px; left: 624px; top: 423px; }
.qr { position: absolute; right: 4px; bottom: 12px; width: 71px; height: 71px; background: #fff; }

.chat { width: 368px; flex: none; display: flex; flex-direction: column; background: #17171a; border: 1px solid #4a4a4a; border-top: 0; }
.chat-title { height: 15px; display: flex; align-items: center; gap: 3px; padding: 0 8px 0 1px; background: #202221; font: 6px "Open Sans", "Noto Sans", sans-serif; color: #eee; }
.chat-title > svg { color: #888; }
.stats { position: relative; height: 22px; flex: none; display: flex; align-items: center; justify-content: center; gap: 8px; background: #050507; border-bottom: 1px solid #303030; font-size: 9px; font-weight: 500; color: #bbb; padding-left: 4px; }
.stats b { color: #fff; font-weight: 700; border-bottom: 1px dotted #777; }
.stats i { width: 1px; height: 11px; background: #333; margin: 0 4px 0 14px; }
.count { display: flex; align-items: center; gap: 3px; }
.stats button { position: absolute; right: 8px; top: 1px; width: 22px; height: 20px; border: 1px solid #303033; border-radius: 3px; }
.log { flex: 1; min-height: 0; overflow: hidden; display: flex; flex-direction: column; justify-content: flex-end; gap: 2px; padding: 0 7px 9px; }
.log p { flex: none; margin: 0; padding: 2px 4px 3px 6px; border-radius: 3px; background: #08080b; font-size: 13px; font-weight: 500; line-height: 20px; color: #f2f2f2; }
.log .tall { padding: 4px 6px 5px; }
.log svg { display: inline-block; vertical-align: middle; margin: -4px 0; }
.log b { font-size: 14px; line-height: 1; font-weight: 600; margin-right: 3px; }
.log small { font-size: 10px; line-height: 1; font-weight: 400; color: #929292; }
.log a { color: #3f82ee; }
.log .badge { width: 16px; height: 16px; margin-right: 2px; }
.log .who { width: 22px; height: 20px; margin-right: 5px; }
.log .k { width: 14px; height: 16px; margin-right: 9px; margin-left: 4px; }
.log .emote { width: 28px; height: 24px; margin-left: 1px; }
.c1 { color: #b7a1f2; } .c2 { color: #2b72d1; } .c3 { color: #4fa345; } .c4 { color: #b09af5; }
.c5 { color: #e0703c; } .c6 { color: #8ca556; } .c7 { color: #dc4f35; } .c8 { color: #d09bf7; }
.c9 { color: #17529f; } .c10 { color: #71f84e; } .c11 { color: #43d2b8; } .c12 { color: #df1b40; }

.taskbar { position: relative; height: 24px; flex: none; display: flex; align-items: center; justify-content: center; background: linear-gradient(90deg, #201d2c 0, #221c2c 28%, #2d1a2b 34%, #33191f 48%, #3b1717 72%, #2e2019 100%); }
.apps { display: flex; gap: 4px; }
.apps button { position: relative; width: 18px; height: 22px; border-radius: 3px; }
.apps svg { width: 12px; height: 12px; }
.apps em { position: absolute; top: 5px; right: 0; border-radius: 3px; padding: 0 1px; background: #e5443c; font: 4px/5px Inter, sans-serif; }
.run::after { content: ""; position: absolute; bottom: 0; left: 8px; width: 3px; height: 1px; background: #aaa; }
.current { background: #442a2a; }
.tray { position: absolute; right: 10px; top: 3px; display: flex; align-items: center; gap: 8px; font: 6px/8px "Open Sans", "Noto Sans", sans-serif; color: #ddd; }
.net { display: flex; gap: 4px; }
.tray time { text-align: right; }
.goal { position: absolute; left: 785px; top: 1px; width: 126px; height: 17px; display: flex; align-items: center; justify-content: flex-end; gap: 2px; padding-right: 4px; border: 2px solid #fff5e4; border-radius: 6px; background: linear-gradient(#f8a83a, #ee7d12); box-shadow: inset 0 0 0 1px #a34e0b; }
.goal b { font-size: 5px; font-weight: 900; }
.goal span { position: absolute; left: 23px; top: -4px; font-size: 7px; line-height: 9px; font-weight: 900; font-style: italic; color: #e8741c; text-shadow: 1px 0 0 #fff5e4, -1px 0 0 #fff5e4, 0 1px 0 #fff5e4, 0 -1px 0 #fff5e4; white-space: nowrap; }
.doge { position: absolute; left: 3px; top: -5px; width: 18px; height: 18px; }
```
FILE: qr.js
```js
// Draws the QR badge: three finder squares, a module field and the portrait in its middle.
const svg = document.querySelector('.qr');
const N = 29;
let seed = 7;
const rnd = () => (seed = (seed * 16807) % 2147483647) / 2147483647;
const finder = (x, y) =>
  `M${x} ${y}h7v7h-7zM${x + 1} ${y + 1}v5h5v-5zM${x + 2} ${y + 2}h3v3h-3z`;
let d = finder(0, 0) + finder(N - 7, 0) + finder(0, N - 7);
for (let y = 0; y < N; y++) {
  for (let x = 0; x < N; x++) {
    const dark = rnd() < 0.5;
    const corner = (x < 8 && (y < 8 || y > N - 9)) || (x > N - 9 && y < 8);
    const middle = Math.hypot(x - 14, y - 14) < 5;
    if (dark && !corner && !middle) d += `M${x} ${y}h1v1h-1z`;
  }
}
svg.innerHTML = `<path d="${d}" fill="#111" fill-rule="evenodd"/>
<path d="M9.500 14q0-5 5-5t5 4v5h-9z" fill="#161212"/>
<ellipse cx="14.800" cy="14" rx="2.800" ry="3.500" fill="#c98f78"/>
<path d="M12 13.400h5.500" stroke="#5b1f1f" stroke-width=".7"/>
<path d="M9 20q2-3 5-3l5 1 1 2z" fill="#e8e4e0"/>
<path d="M13.500 15h4l-.5 3h-3z" fill="#bfe0cf"/>`;
```
